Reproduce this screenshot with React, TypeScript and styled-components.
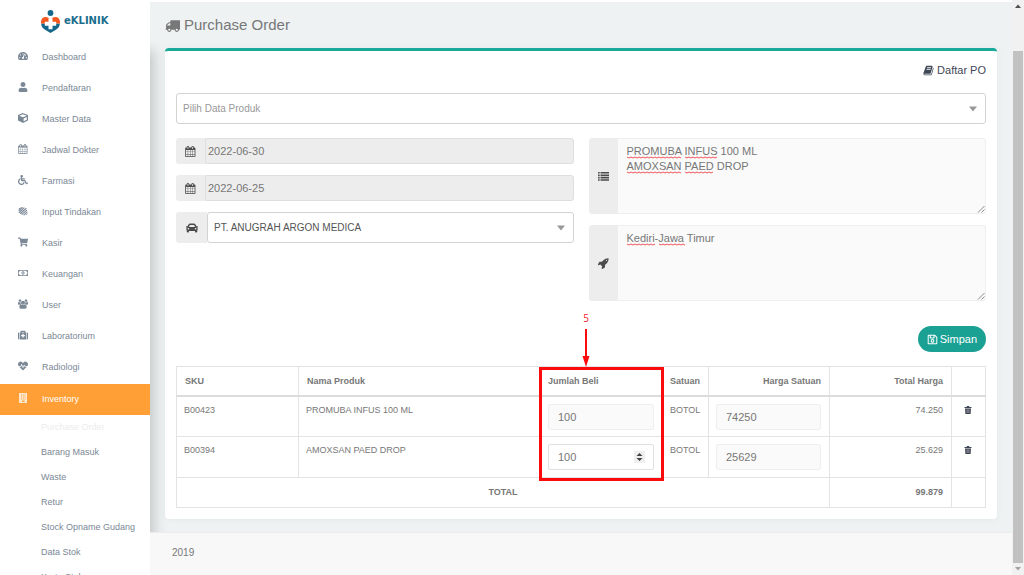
import React from "react";
import styled, { createGlobalStyle } from "styled-components";
import {
  FaCube,
  FaWheelchair,
  FaShoppingCart,
  FaRegMoneyBillAlt,
  FaMedkit,
  FaHeartbeat,
  FaTachometerAlt,
  FaUser,
  FaCar,
  FaRegSave,
} from "react-icons/fa";

const GlobalStyle = createGlobalStyle`
  *, *::before, *::after { box-sizing: border-box; }
  body {
    margin: 0;
    background: #eef2f3;
    color: #777;
    font-family: "Liberation Sans", Arial, sans-serif;
    font-size: 9px;
    line-height: 12px;
  }
  button, input, select, textarea { font-family: inherit; }
`;

const Page = styled.div`
  display: grid;
  grid-template-columns: 150px minmax(0, 1fr) 12px;
  min-height: 100vh;
`;

/* ---------- sidebar ---------- */

const Sidebar = styled.aside`
  position: sticky;
  top: 0;
  z-index: 1;
  display: flex;
  flex-direction: column;
  height: 100vh;
`;

const Brand = styled.a`
  position: relative;
  z-index: 1;
  display: flex;
  align-items: center;
  gap: 4px;
  height: 42px;
  padding-left: 41px;
  background: #fff;
  color: #1c6d8c;
  font: bold 10px/12px "DejaVu Sans", sans-serif;
  text-decoration: none;
`;

const Nav = styled.nav`
  flex: 1;
  min-height: 0;
  overflow: hidden;
  background: #fff;
  box-shadow: 4px 8px 12px rgba(0, 0, 0, 0.18);
`;

const NavList = styled.ul`
  margin: 0;
  padding: 0;
  list-style: none;
`;

const NavLink = styled.a<{ $active?: boolean }>`
  display: flex;
  align-items: center;
  gap: 14px;
  height: 31px;
  margin-top: ${(p) => (p.$active ? "1px" : "0")};
  padding: 0 0 2px 18px;
  background: ${(p) => (p.$active ? "#ff9f36" : "transparent")};
  color: ${(p) => (p.$active ? "#fff" : "#7b8896")};
  text-decoration: none;

  svg {
    width: 10px;
    height: 10px;
    margin-bottom: 2px;
  }
`;

const SubLink = styled.a<{ $current?: boolean }>`
  display: flex;
  align-items: center;
  height: 25px;
  padding: 0 0 2px 41px;
  color: ${(p) => (p.$current ? "#ececec" : "#7b8896")};
  text-decoration: none;
`;

/* ---------- main area ---------- */

const Main = styled.main`
  display: flex;
  flex-direction: column;
  border-top: 2px solid #fff;
`;

const Title = styled.h1`
  display: flex;
  align-items: center;
  gap: 4px;
  height: 46px;
  margin: 0;
  padding: 0 15px;
  color: #777;
  font-size: 15px;
  font-weight: 400;
  line-height: 18px;
`;

const Card = styled.section`
  margin: 0 15px 13px;
  padding: 11px;
  border-top: 3px solid #17a999;
  border-radius: 4px;
  background: #fff;
  box-shadow: 0 0 6px rgba(60, 90, 100, 0.06);
`;

const CardTools = styled.div`
  display: flex;
  justify-content: flex-end;
  margin-bottom: 15px;
`;

const ToolLink = styled.a`
  display: flex;
  align-items: center;
  gap: 3px;
  color: #3f4756;
  font-size: 11px;
  line-height: 16px;
  text-decoration: none;
`;

const SelectBox = styled.div`
  position: relative;
  flex: 1;
  min-width: 0;

  svg {
    position: absolute;
    top: 13px;
    right: 8px;
    pointer-events: none;
  }
`;

const Select = styled.select<{ $muted?: boolean }>`
  display: block;
  width: 100%;
  height: 31px;
  padding: 0 24px 0 6px;
  appearance: none;
  border: 1px solid #d3d3d3;
  border-radius: 3px;
  background: #fff;
  color: ${(p) => (p.$muted ? "#999" : "#555")};
  font-size: 10px;
`;

const FormGrid = styled.div`
  display: grid;
  grid-template-columns: 1fr 1fr;
  gap: 15px;
  margin: 14px 0 25px;
`;

const FormColumn = styled.div`
  display: flex;
  flex-direction: column;
  gap: 11px;
`;

const Group = styled.label`
  display: flex;
`;

const Addon = styled.span<{ $wide?: boolean }>`
  display: flex;
  flex: none;
  align-items: center;
  justify-content: center;
  width: ${(p) => (p.$wide ? "31px" : "29px")};
  border-radius: 3px 0 0 3px;
  background: #ededed;
  color: #4c4c4c;
`;

const DateInput = styled.input`
  flex: 1;
  min-width: 0;
  height: 26px;
  padding: 0 2px;
  border: 1px solid #dfdfdf;
  border-radius: 0 3px 3px 0;
  background: #ededed;
  color: #777;
  font-size: 11px;
`;

const AreaBox = styled.div`
  position: relative;
  flex: 1;
  min-width: 0;
`;

const Area = styled.textarea`
  display: block;
  width: 100%;
  height: 76px;
  padding: 5px 9px;
  resize: none;
  border: 1px solid #efefef;
  border-left: 0;
  border-radius: 0 3px 3px 0;
  background: #fafafa;
  color: #777;
  font-size: 11px;
  line-height: 15px;
`;

const Squiggles = styled.svg`
  position: absolute;
  top: 0;
  left: 9px;
  pointer-events: none;
`;

const Grip = styled.svg`
  position: absolute;
  right: 1px;
  bottom: 1px;
  pointer-events: none;
`;

const Actions = styled.div`
  display: flex;
  justify-content: flex-end;
  margin-bottom: 14px;
`;

const SaveButton = styled.button`
  display: flex;
  align-items: center;
  gap: 2px;
  height: 26px;
  padding: 0 9px;
  border: 0;
  border-radius: 13px;
  background: #1aa193;
  color: #fff;
  font-size: 11px;
`;

/* ---------- order table ---------- */

const Table = styled.table`
  width: 100%;
  table-layout: fixed;
  border-collapse: collapse;
`;

const Col = styled.col<{ $width?: number }>`
  width: ${(p) => (p.$width ? `${p.$width}px` : "auto")};
`;

const Th = styled.th<{ $align?: string }>`
  position: relative;
  height: 29px;
  padding: 0 8px;
  border: 1px solid #e3e3e3;
  border-bottom: 2px solid #dcdcdc;
  text-align: ${(p) => p.$align || "left"};
`;

const Td = styled.td<{ $align?: string }>`
  height: 41px;
  padding: 7px 8px 0 7px;
  border: 1px solid #e3e3e3;
  text-align: ${(p) => p.$align || "left"};
  vertical-align: top;
`;

const UnitTh = styled(Th)`
  padding: 0 6px;
`;

const UnitTd = styled(Td)`
  padding: 7px 6px 0;
`;

const TotalTd = styled(Td)`
  height: 30px;
  padding: 0 8px 2px;
  font-weight: 700;
  vertical-align: middle;
`;

const CellBox = styled.div`
  position: relative;
  margin-right: 1px;
  margin-left: 1px;

  svg {
    position: absolute;
    top: 7px;
    right: 9px;
    pointer-events: none;
  }
`;

const CellInput = styled.input`
  display: block;
  width: 100%;
  height: 26px;
  padding: 0 9px;
  appearance: textfield;
  border: 1px solid #e0e0e0;
  border-radius: 2px;
  background: #fff;
  color: #777;
  font-size: 11px;

  &:read-only {
    border-color: #efefef;
    background: #fafafa;
  }

  &::-webkit-inner-spin-button {
    appearance: none;
    margin: 0;
  }
`;

const IconButton = styled.button`
  display: block;
  margin: 2px auto 0;
  padding: 0;
  border: 0;
  background: none;
  line-height: 0;
`;

/* numbered marker laid over the quantity column */
const Callout = styled.span`
  position: absolute;
  top: 0;
  left: -1px;
  z-index: 2;
  width: calc(100% + 2px);
  height: 114px;
  border: 3px solid #fb0a0e;
  pointer-events: none;
`;

const CalloutStep = styled.span`
  position: absolute;
  bottom: calc(100% + 3px);
  left: 39px;
  display: flex;
  flex-direction: column;
  align-items: center;
  width: 10px;
  color: #f5222d;
  font: 400 10px/12px "Open Sans", sans-serif;
`;

const Footer = styled.footer`
  position: relative;
  z-index: 2;
  flex: 1;
  padding: 14px 22px;
  border-top: 1px solid #ececec;
  background: #f8f8f8;
  font-size: 10px;
`;

/* ---------- page scroll rail ---------- */

const Rail = styled.div`
  position: sticky;
  top: 0;
  display: flex;
  flex-direction: column;
  align-items: center;
  height: 100vh;
  background: #f1f1f1;
`;

const RailEnd = styled.span`
  display: flex;
  flex: none;
  align-items: center;
  height: 12px;
`;

const RailThumb = styled.span`
  flex: 1;
  width: 10px;
  margin-top: 39px;
  background: #c1c1c1;
`;

/* ---------- drawings ---------- */

const LogoMark = () => (
  <svg width="19" height="23" viewBox="0 0 19 23" aria-hidden="true">
    <circle cx="9.5" cy="3" r="2.9" fill="#14678a" />
    <path d="M.2 13.500h18.600c0 3.500-1.800 5-4.300 6.500L9.500 23l-5-3C2 18.500.2 17 .2 13.500z" fill="#14678a" />
    <path d="M0 13.500C-.3 9.500 1.500 7 4.500 7c2 0 3.300.9 4 2v4.500zM19 13.500c.3-4-1.500-6.500-4.500-6.500-2 0-3.300.9-4 2v4.500z" fill="#f4581f" />
    <path d="M7.500 8.500h4v3.300h3.700v3.900h-3.700v3.600h-4v-3.600H3.800v-3.900h3.700z" fill="#fff" />
  </svg>
);

const CalendarIcon = ({ size = 12 }: { size?: number }) => (
  <svg width={size} height={size} viewBox="64 0 1728 1792" fill="currentColor" aria-hidden="true">
    <path d="M192 1664h288v-288h-288v288zm352 0h320v-288h-320v288zm-352-352h288v-320h-288v320zm352 0h320v-320h-320v320zm-352-384h288v-288h-288v288zm736 736h320v-288h-320v288zm-384-736h320v-288h-320v288zm768 736h288v-288h-288v288zm-384-352h320v-320h-320v320zm-352-864v-288q0-13-9.500-22.500t-22.500-9.500h-64q-13 0-22.500 9.500t-9.500 22.500v288q0 13 9.500 22.500t22.500 9.500h64q13 0 22.500-9.500t9.500-22.500zm736 864h288v-320h-288v320zm-384-384h320v-288h-320v288zm384 0h288v-288h-288v288zm32-480v-288q0-13-9.500-22.500t-22.500-9.500h-64q-13 0-22.500 9.500t-9.500 22.500v288q0 13 9.500 22.500t22.500 9.500h64q13 0 22.500-9.500t9.500-22.500zm384-64v1280q0 52-38 90t-90 38h-1408q-52 0-90-38t-38-90v-1280q0-52 38-90t90-38h128v-96q0-66 47-113t113-47h64q66 0 113 47t47 113v96h384v-96q0-66 47-113t113-47h64q66 0 113 47t47 113v96h128q52 0 90 38t38 90z" />
  </svg>
);

const TruckIcon = () => (
  <svg width="15" height="15" viewBox="0 0 1792 1792" fill="currentColor" aria-hidden="true">
    <path d="M640 1408q0-52-38-90t-90-38-90 38-38 90 38 90 90 38 90-38 38-90zm-384-512h384v-256h-158q-13 0-22 9l-195 195q-9 9-9 22v30zm1280 512q0-52-38-90t-90-38-90 38-38 90 38 90 90 38 90-38 38-90zm256-1088v1024q0 15-4 26.500t-13.500 18.500-16.500 11.500-23.500 6-22.500 2-25.500 0-22.500-.5q0 106-75 181t-181 75-181-75-75-181h-384q0 106-75 181t-181 75-181-75-75-181h-64q-3 0-22.500.5t-25.500 0-22.500-2-23.500-6-16.500-11.500-13.500-18.500-4-26.500q0-26 19-45t45-19v-320q0-8-.5-35t0-38 2.500-34.500 6.500-37 14-30.500 22.500-30l198-198q19-19 50.500-32t58.500-13h160v-192q0-26 19-45t45-19h1024q26 0 45 19t19 45z" />
  </svg>
);

const BookIcon = () => (
  <svg width="11" height="11" viewBox="0 64 1792 1664" fill="currentColor" aria-hidden="true">
    <path d="M1703 478q40 57 18 129l-275 906q-19 64-76.500 107.500t-122.500 43.500h-923q-77 0-148.500-53.500t-99.500-131.500q-24-67-2-127 0-4 3-27t4-37q1-8-3-21.500t-3-19.500q2-11 8-21t16.500-23.500 16.500-23.500q23-38 45-91.500t30-91.500q3-10 .5-30t-.5-28q3-11 17-28t17-23q21-36 42-92t25-90q1-9-2.500-32t.5-28q4-13 22-30.500t22-22.500q19-26 42.500-84.500t27.500-96.500q1-8-3-25.500t-2-26.500q2-8 9-18t18-23 17-21q8-12 16.500-30.500t15-35 16-36 19.500-32 26.500-23.500 36-11.500 47.500 5.500l-1 3q38-9 51-9h761q74 0 114 56t18 130l-274 906q-36 119-71.500 153.500t-128.500 34.500h-869q-27 0-38 15-11 16-1 43 24 70 144 70h923q29 0 56-15.500t35-41.500l300-987q7-22 5-57 38 15 59 43zm-1064 2q-4 13 2 22.500t20 9.500h608q13 0 25.500-9.500t16.500-22.500l21-64q4-13-2-22.500t-20-9.500h-608q-13 0-25.500 9.500t-16.500 22.500zm-83 256q-4 13 2 22.500t20 9.500h608q13 0 25.500-9.500t16.500-22.500l21-64q4-13-2-22.500t-20-9.500h-608q-13 0-25.500 9.500t-16.500 22.500z" />
  </svg>
);

const RocketIcon = () => (
  <svg width="11" height="11" viewBox="64 96 1664 1664" fill="currentColor" aria-hidden="true">
    <path d="M1440 448q0-40-28-68t-68-28-68 28-28 68 28 68 68 28 68-28 28-68zm224-288q0 249-75.500 430.500t-253.500 360.500q-81 80-195 176l-20 379q-2 16-16 26l-384 224q-7 4-16 4-12 0-23-9l-64-64q-13-14-8-32l85-276-281-281-276 85q-3 1-9 1-14 0-23-9l-64-64q-17-19-5-39l224-384q10-14 26-16l379-20q96-114 176-195 188-187 358-258t431-71q14 0 24 9.500t10 22.500z" />
  </svg>
);

const UsersIcon = () => (
  <svg viewBox="64 0 1920 1792" fill="currentColor" aria-hidden="true">
    <path d="M657 896q-162 5-265 128h-134q-82 0-138-40.500t-62-118.500q0-353 124-353 6 0 43.500 21t97.500 42.500 119 21.500q67 0 133-23-5 37-5 66 0 159 93 288zm1071 637q0 120-73 189.500t-194 69.500h-874q-121 0-194-69.500t-73-189.500q0-53 3.500-103.500t14-109 26.500-108.500 43-97.500 62-81 85.500-53.500 111.500-20q10 0 43 21.500t73 48 107 48 135 21.500 135-21.500 107-48 73-48 43-21.500q61 0 111.500 20t85.500 53.500 62 81 43 97.500 26.500 108.500 14 109 3.500 103.500zm-1024-1277q0 106-75 181t-181 75-181-75-75-181 75-181 181-75 181 75 75 181zm704 384q0 159-112.500 271.500t-271.500 112.500-271.500-112.500-112.500-271.500 112.500-271.500 271.500-112.500 271.500 112.500 112.500 271.500zm576 225q0 78-62 118.500t-138 40.500h-134q-103-123-265-128 93-129 93-288 0-29-5-66 66 23 133 23 59 0 119-21.500t97.500-42.500 43.500-21q124 0 124 353zm-128-609q0 106-75 181t-181 75-181-75-75-181 75-181 181-75 181 75 75 181z" />
  </svg>
);

const HandsIcon = () => (
  <svg viewBox="0 0 10 10" fill="none" stroke="currentColor" strokeLinecap="round" aria-hidden="true">
    <path d="M1 4.500L4 1.500M1.200 6.500L6 1.800M2.500 7.500L8 2.500M4 8.300L8.600 4.300M6 8.800L9 6.200" strokeWidth="1.1" />
    <path d="M2 2L1 3M8.500 8.500l.6-.5" strokeWidth=".9" />
  </svg>
);

const BuildingIcon = () => (
  <svg viewBox="0 0 10 10" aria-hidden="true">
    <path d="M1 0h8v10H1z" fill="#ffe7cb" />
    <path
      d="M3 1.500h1v1H3zM4.800 1.500h1v1h-1zM6.500 1.500h1v1h-1zM3 3.500h1v1H3zM4.800 3.500h1v1h-1zM6.500 3.500h1v1h-1zM3 5.500h1v1H3zM4.800 5.500h1v1h-1zM6.500 5.500h1v1h-1zM4 7.500h2.500V9H4z"
      fill="#ffa94b"
    />
  </svg>
);

const ListIcon = () => (
  <svg width="11" height="9" viewBox="0 0 11 9" fill="currentColor" aria-hidden="true">
    {[0, 2.4, 4.8, 7.2].map((y) => (
      <path key={y} d={`M0 ${y}h1.700v1.600H0zM2.500 ${y}H11v1.600H2.500z`} />
    ))}
  </svg>
);

const Caret = () => (
  <svg width="10" height="6" viewBox="0 0 10 6" aria-hidden="true">
    <path d="M1 .5h8L5 5.500z" fill="#999" />
  </svg>
);

const TrashIcon = () => (
  <svg width="8" height="8" viewBox="0 0 8 8" aria-hidden="true">
    <path d="M.5 1h2L3 0h2l.5 1h2v1h-7zM1 2.400h6L6.600 8H1.400z" fill="#3f4654" />
    <path d="M2.900 3.500v3.300M4 3.500v3.300M5.100 3.500v3.300" stroke="#c5c8cd" strokeWidth=".5" />
  </svg>
);

const Spinner = () => (
  <svg width="11" height="12" viewBox="0 0 11 12" aria-hidden="true">
    <path d="M0 0h11v12H0z" fill="#efefef" />
    <path d="M2.500 5l3-3 3 3zM2.500 7l3 3 3-3z" fill="#444" />
  </svg>
);

type Mark = { x: number; y: number; w: number };

const wave = ({ x, y, w }: Mark) => {
  let d = `M${x} ${y}`;
  for (let i = 1; i * 2 <= w; i++) d += `L${x + i * 2} ${i % 2 ? y + 1 : y}`;
  return d;
};

const navItems = [
  { label: "Dashboard", icon: <FaTachometerAlt /> },
  { label: "Pendaftaran", icon: <FaUser /> },
  { label: "Master Data", icon: <FaCube /> },
  { label: "Jadwal Dokter", icon: <CalendarIcon /> },
  { label: "Farmasi", icon: <FaWheelchair /> },
  { label: "Input Tindakan", icon: <HandsIcon /> },
  { label: "Kasir", icon: <FaShoppingCart /> },
  { label: "Keuangan", icon: <FaRegMoneyBillAlt /> },
  { label: "User", icon: <UsersIcon /> },
  { label: "Laboratorium", icon: <FaMedkit /> },
  { label: "Radiologi", icon: <FaHeartbeat /> },
  { label: "Inventory", icon: <BuildingIcon /> },
];

const subItems = [
  "Purchase Order",
  "Barang Masuk",
  "Waste",
  "Retur",
  "Stock Opname Gudang",
  "Data Stok",
  "Kartu Stok",
];

const orderRows = [
  { sku: "B00423", name: "PROMUBA INFUS 100 ML", qty: 100, unit: "BOTOL", price: 74250, total: "74.250", locked: true },
  { sku: "B00394", name: "AMOXSAN PAED DROP", qty: 100, unit: "BOTOL", price: 25629, total: "25.629", locked: false },
];

type NoteProps = { label: string; icon: React.ReactNode; value: string; marks: Mark[] };

const NoteField = ({ label, icon, value, marks }: NoteProps) => (
  <Group>
    <Addon>{icon}</Addon>
    <AreaBox>
      <Area aria-label={label} defaultValue={value} spellCheck={false} />
      <Squiggles width="140" height="40" aria-hidden="true">
        {marks.map((m) => (
          <path key={`${m.x}-${m.y}`} d={wave(m)} fill="none" stroke="#f0545c" />
        ))}
      </Squiggles>
      <Grip width="8" height="8" viewBox="0 0 8 8" aria-hidden="true">
        <path d="M1 7.500L7.500 1M4.500 7.500l3-3" stroke="#8a8a8a" fill="none" />
      </Grip>
    </AreaBox>
  </Group>
);

export default function App() {
  return (
    <>
      <GlobalStyle />
      <Page>
        <Sidebar>
          <Brand href="#">
            <LogoMark />
            eKLINIK
          </Brand>
          <Nav>
            <NavList>
              {navItems.map((item) => (
                <li key={item.label}>
                  <NavLink href="#" $active={item.label === "Inventory"}>
                    {item.icon}
                    {item.label}
                  </NavLink>
                </li>
              ))}
              {subItems.map((label, i) => (
                <li key={label}>
                  <SubLink href="#" $current={i === 0}>
                    {label}
                  </SubLink>
                </li>
              ))}
            </NavList>
          </Nav>
        </Sidebar>

        <Main>
          <Title>
            <TruckIcon />
            Purchase Order
          </Title>

          <Card>
            <CardTools>
              <ToolLink href="#">
                <BookIcon />
                Daftar PO
              </ToolLink>
            </CardTools>

            <SelectBox>
              <Select aria-label="Produk" $muted>
                <option>Pilih Data Produk</option>
              </Select>
              <Caret />
            </SelectBox>

            <FormGrid>
              <FormColumn>
                <Group>
                  <Addon>
                    <CalendarIcon size={11} />
                  </Addon>
                  <DateInput aria-label="Jatuh tempo" defaultValue="2022-06-30" readOnly />
                </Group>
                <Group>
                  <Addon>
                    <CalendarIcon size={11} />
                  </Addon>
                  <DateInput aria-label="Tanggal" defaultValue="2022-06-25" readOnly />
                </Group>
                <Group>
                  <Addon $wide>
                    <FaCar size={12} />
                  </Addon>
                  <SelectBox>
                    <Select aria-label="Supplier">
                      <option>PT. ANUGRAH ARGON MEDICA</option>
                    </Select>
                    <Caret />
                  </SelectBox>
                </Group>
              </FormColumn>
              <FormColumn>
                <NoteField
                  label="Keterangan"
                  icon={<ListIcon />}
                  value={"PROMUBA INFUS 100 ML\nAMOXSAN PAED DROP"}
                  marks={[
                    { x: 0, y: 19, w: 54 },
                    { x: 58, y: 19, w: 32 },
                    { x: 0, y: 34, w: 54 },
                    { x: 58, y: 34, w: 28 },
                  ]}
                />
                <NoteField
                  label="Alamat"
                  icon={<RocketIcon />}
                  value="Kediri-Jawa Timur"
                  marks={[
                    { x: 0, y: 19, w: 28 },
                    { x: 32, y: 19, w: 26 },
                  ]}
                />
              </FormColumn>
            </FormGrid>

            <Actions>
              <SaveButton type="button">
                <FaRegSave size={11} />
                Simpan
              </SaveButton>
            </Actions>

            <Table>
              <colgroup>
                <Col $width={122} />
                <Col />
                <Col $width={124} />
                <Col $width={45} />
                <Col $width={121} />
                <Col $width={122} />
                <Col $width={34} />
              </colgroup>
              <thead>
                <tr>
                  <Th>SKU</Th>
                  <Th>Nama Produk</Th>
                  <Th>
                    Jumlah Beli
                    <Callout>
                      <CalloutStep>
                        5
                        <svg width="10" height="43" viewBox="0 0 10 43" aria-hidden="true">
                          <path d="M5 5v30" stroke="#fb0a0e" strokeWidth="2" />
                          <path d="M1.500 32h7L5 43z" fill="#fb0a0e" />
                        </svg>
                      </CalloutStep>
                    </Callout>
                  </Th>
                  <UnitTh>Satuan</UnitTh>
                  <Th $align="right">Harga Satuan</Th>
                  <Th $align="right">Total Harga</Th>
                  <Th aria-label="Aksi" />
                </tr>
              </thead>
              <tbody>
                {orderRows.map((row) => (
                  <tr key={row.sku}>
                    <Td>{row.sku}</Td>
                    <Td>{row.name}</Td>
                    <Td>
                      <CellBox>
                        <CellInput
                          type="number"
                          aria-label={`Jumlah beli ${row.name}`}
                          defaultValue={row.qty}
                          readOnly={row.locked}
                        />
                        {!row.locked && <Spinner />}
                      </CellBox>
                    </Td>
                    <UnitTd>{row.unit}</UnitTd>
                    <Td>
                      <CellInput
                        type="number"
                        aria-label={`Harga satuan ${row.name}`}
                        defaultValue={row.price}
                        readOnly
                      />
                    </Td>
                    <Td $align="right">{row.total}</Td>
                    <Td>
                      <IconButton type="button" aria-label={`Hapus ${row.name}`}>
                        <TrashIcon />
                      </IconButton>
                    </Td>
                  </tr>
                ))}
                <tr>
                  <TotalTd colSpan={5} $align="center">
                    TOTAL
                  </TotalTd>
                  <TotalTd $align="right">99.879</TotalTd>
                  <TotalTd />
                </tr>
              </tbody>
            </Table>
          </Card>

          <Footer>2019</Footer>
        </Main>

        <Rail aria-hidden="true">
          <RailEnd>
            <svg width="6" height="4" viewBox="0 0 6 4">
              <path d="M0 4l3-3.500L6 4z" fill="#505050" />
            </svg>
          </RailEnd>
          <RailThumb />
          <RailEnd>
            <svg width="6" height="4" viewBox="0 0 6 4">
              <path d="M0 0l3 3.500L6 0z" fill="#a3a3a3" />
            </svg>
          </RailEnd>
        </Rail>
      </Page>
    </>
  );
}
